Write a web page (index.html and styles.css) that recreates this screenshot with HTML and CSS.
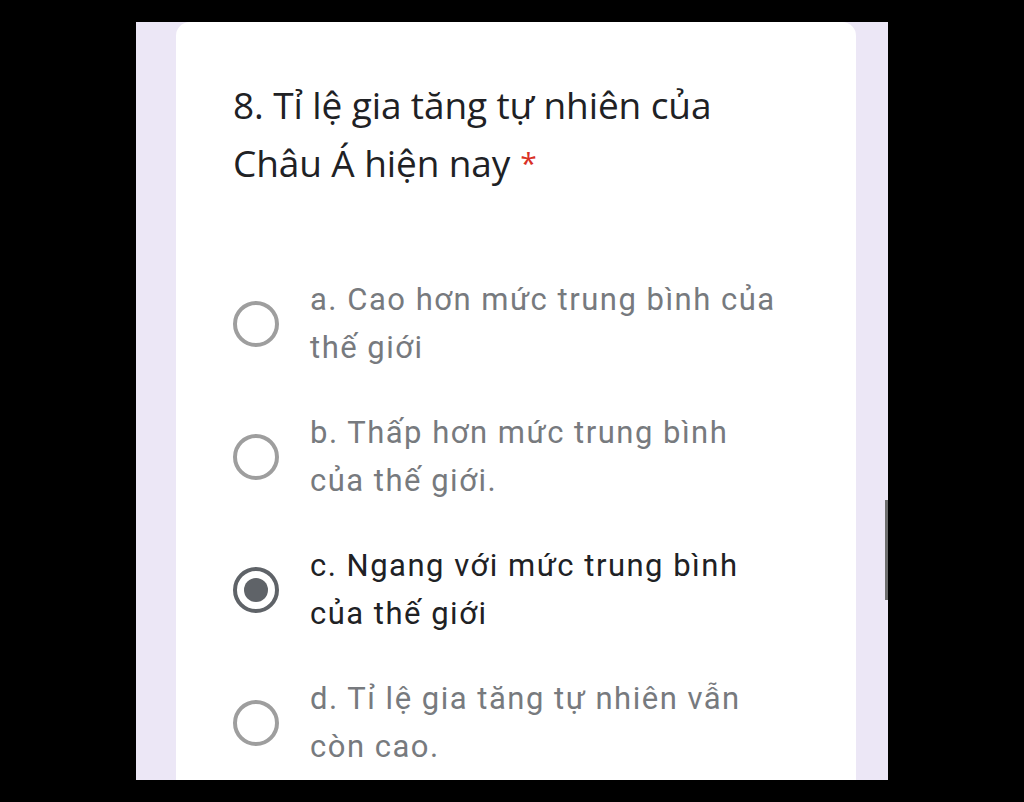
FILE: index.html
```html
<!DOCTYPE html>
<html lang="vi">
<head>
<meta charset="utf-8">
<link rel="stylesheet" href="styles.css">
</head>
<body>
<div class="panel">
  <div class="card">
    <div class="title">8. Tỉ lệ gia tăng tự nhiên của Châu Á hiện nay<span class="req">*</span></div>
    <div class="options">
      <div class="opt">
        <span class="radio"></span>
        <span class="label">a. Cao hơn mức trung bình của thế giới</span>
      </div>
      <div class="opt">
        <span class="radio"></span>
        <span class="label">b. Thấp hơn mức trung bình của thế giới.</span>
      </div>
      <div class="opt checked">
        <span class="radio"></span>
        <span class="label">c. Ngang với mức trung bình của thế giới</span>
      </div>
      <div class="opt">
        <span class="radio"></span>
        <span class="label">d. Tỉ lệ gia tăng tự nhiên vẫn còn cao.</span>
      </div>
    </div>
  </div>
  <div class="scroll"></div>
</div>
</body>
</html>
```
FILE: styles.css
```css
html, body {
  margin: 0;
  padding: 0;
  background: #000;
  height: 802px;
  overflow: hidden;
}
.panel {
  position: relative;
  margin: 22px 0 0 136px;
  width: 752px;
  height: 758px;
  background: #ece7f6;
  overflow: hidden;
}
.card {
  margin-left: 40px;
  width: 680px;
  height: 758px;
  background: #fff;
  border-radius: 14px 14px 0 0;
  box-sizing: border-box;
  padding: 54px 0 0 57px;
}
.title {
  font-family: "Open Sans", sans-serif;
  font-size: 37px;
  line-height: 58px;
  color: #202124;
  width: 520px;
  letter-spacing: -0.1px;
}
.req {
  color: #d93025;
  font-size: 30px;
  line-height: 0;
  vertical-align: 3px;
  margin-left: 10px;
}
.options {
  margin-top: 84px;
  display: flex;
  flex-direction: column;
  gap: 37px;
}
.opt {
  display: flex;
  align-items: center;
  height: 96px;
}
.radio {
  flex: none;
  width: 46px;
  height: 46px;
  box-sizing: border-box;
  border: 4px solid #9e9e9e;
  border-radius: 50%;
  margin-right: 31px;
  position: relative;
}
.checked .radio {
  border-color: #5f6368;
}
.checked .radio::after {
  content: "";
  position: absolute;
  left: 7px;
  top: 7px;
  width: 24px;
  height: 24px;
  border-radius: 50%;
  background: #5f6368;
}
.label {
  font-family: Roboto, sans-serif;
  font-size: 31px;
  line-height: 48px;
  letter-spacing: 1.5px;
  color: #777a7e;
  width: 472px;
}
.checked .label {
  color: #202124;
}
.scroll {
  position: absolute;
  right: 0;
  top: 478px;
  width: 3px;
  height: 100px;
  background: #6d6d6d;
}
```
